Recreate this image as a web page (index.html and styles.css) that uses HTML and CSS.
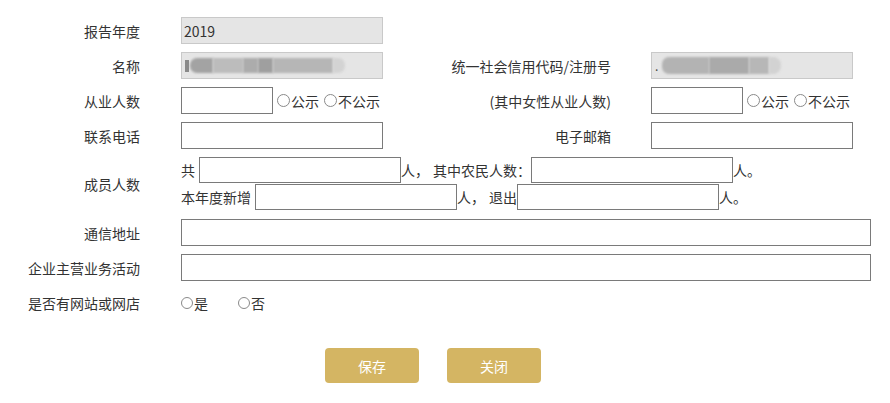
FILE: index.html
```html
<!DOCTYPE html>
<html lang="zh-CN">
<head>
<meta charset="utf-8">
<title>年报</title>
<link rel="stylesheet" href="styles.css">
</head>
<body>
<div class="page">
  <div class="form">
    <div class="lbl">报告年度</div>
    <div class="cell c2"><input class="inp ro w202" type="text" value="2019" readonly></div>
    <div class="cell c3"></div>
    <div class="cell c4"></div>

    <div class="lbl">名称</div>
    <div class="cell c2">
      <div class="inp ro w202 blurbox">
        <span class="ch"></span>
        <span class="blob b1"></span><span class="blob b2"></span><span class="blob b3"></span><span class="blob b4"></span><span class="blob b5"></span><span class="blob b6"></span>
      </div>
    </div>
    <div class="lbl c3">统一社会信用代码/注册号</div>
    <div class="cell c4">
      <div class="inp ro w202 blurbox">
        <span class="dot">.</span>
        <span class="blob r1"></span><span class="blob r2"></span><span class="blob r3"></span><span class="blob r4"></span>
      </div>
    </div>

    <div class="lbl">从业人数</div>
    <div class="cell c2 line">
      <input class="inp w92" type="text">
      <span class="radios"><span class="rd"></span><span>公示</span><span class="rd second"></span><span>不公示</span></span>
    </div>
    <div class="lbl c3">(其中女性从业人数)</div>
    <div class="cell c4 line">
      <input class="inp w92" type="text">
      <span class="radios"><span class="rd"></span><span>公示</span><span class="rd second"></span><span>不公示</span></span>
    </div>

    <div class="lbl">联系电话</div>
    <div class="cell c2"><input class="inp w202" type="text"></div>
    <div class="lbl c3">电子邮箱</div>
    <div class="cell c4"><input class="inp w202" type="text"></div>

    <div class="lbl">成员人数</div>
    <div class="cell wide members">
      <div class="line">
        <span class="t">共</span><input class="inp w202 h26 ml4" type="text"><span class="t">人，</span><span class="t ml4">其中农民人数：</span><input class="inp w202 h26" type="text"><span class="t">人。</span>
      </div>
      <div class="line mt1">
        <span class="t">本年度新增</span><input class="inp w202 h26 ml4" type="text"><span class="t">人，</span><span class="t ml4">退出</span><input class="inp w202 h26" type="text"><span class="t">人。</span>
      </div>
    </div>

    <div class="lbl">通信地址</div>
    <div class="cell wide"><input class="inp wfull" type="text"></div>

    <div class="lbl">企业主营业务活动</div>
    <div class="cell wide"><input class="inp wfull" type="text"></div>

    <div class="lbl">是否有网站或网店</div>
    <div class="cell wide line rowh">
      <span class="opt"><span class="rd"></span>是</span>
      <span class="opt opt2"><span class="rd"></span>否</span>
    </div>
  </div>

  <div class="actions">
    <button class="btn" type="button">保存</button>
    <button class="btn" type="button">关闭</button>
  </div>
</div>
</body>
</html>
```

FILE: styles.css
```css
html, body {
  margin: 0;
  padding: 0;
  background: #ffffff;
}

body {
  font-family: "Noto Sans CJK SC", "Noto Sans", sans-serif;
  font-size: 14px;
  color: #333333;
}

.page {
  padding-top: 17px;
}

.form {
  display: grid;
  grid-template-columns: 140px 291px 180px 260px;
  row-gap: 8px;
  align-items: center;
}

.lbl {
  text-align: right;
  white-space: nowrap;
  line-height: 20px;
}

.cell.c2,
.cell.wide {
  padding-left: 41px;
}

.cell.c4 {
  padding-left: 40px;
}

.cell.wide {
  grid-column: 2 / 5;
}

.line {
  display: flex;
  align-items: center;
  white-space: nowrap;
}

.inp {
  box-sizing: border-box;
  height: 27px;
  border: 1px solid #7a7a7a;
  background: #ffffff;
  margin: 0;
  padding: 0 2px;
  font-family: inherit;
  font-size: 14px;
  color: #333333;
  outline: none;
  display: block;
}

.inp.ro {
  background: #e5e5e5;
  border-color: #c9c9c9;
  padding-left: 2px;
}

.w202 { width: 202px; }
.w92 { width: 92px; }
.wfull { width: 690px; }
.h26 { height: 26px; }
.ml4 { margin-left: 4px; }
.mt1 { margin-top: 1px; }

.members {
  padding-bottom: 1px;
}

.blurbox {
  display: flex;
  align-items: center;
  overflow: hidden;
  padding-left: 0;
}

.blurbox .ch {
  display: block;
  width: 4px;
  height: 12px;
  margin-left: 1px;
  margin-right: 1px;
  background: #8a8a8a;
  filter: blur(0.7px);
}

.blurbox .dot {
  width: 7px;
  color: #444;
  font-size: 12px;
  line-height: 12px;
  padding-left: 1px;
}

.blob {
  display: block;
  height: 15px;
  filter: blur(0.8px);
}

.b1 { width: 23px; background: #a3a3a3; border-radius: 7px 0 0 7px; }
.b2 { width: 30px; background: #bcbcbc; }
.b3 { width: 15px; background: #acacac; }
.b4 { width: 15px; background: #9f9f9f; }
.b5 { width: 60px; background: #b6b6b6; }
.b6 { width: 12px; background: #d3d3d3; border-radius: 0 7px 7px 0; }

.r1 { width: 47px; background: #b3b3b3; border-radius: 7px 0 0 7px; height: 17px; }
.r2 { width: 40px; background: #aaaaaa; height: 17px; }
.r3 { width: 20px; background: #b7b7b7; height: 17px; }
.r4 { width: 12px; background: #d2d2d2; border-radius: 0 8px 8px 0; height: 17px; }

.radios {
  display: inline-flex;
  align-items: center;
  margin-left: 4px;
}

.rd {
  box-sizing: border-box;
  display: inline-block;
  width: 13px;
  height: 13px;
  border: 1px solid #8a8a8a;
  border-radius: 50%;
  background: #ffffff;
  margin-right: 1px;
}

.rd.second {
  margin-left: 5px;
}

.rowh {
  height: 27px;
}

.opt {
  display: inline-flex;
  align-items: center;
}

.opt .rd {
  width: 12px;
  height: 12px;
  margin-right: 1px;
}

.opt2 {
  margin-left: 30px;
}

.actions {
  display: flex;
  gap: 28px;
  padding-left: 325px;
  margin-top: 32px;
}

.btn {
  width: 94px;
  height: 35px;
  border: none;
  border-radius: 4px;
  background: #d4b563;
  color: #ffffff;
  font-family: inherit;
  font-size: 14px;
  padding: 0;
  cursor: pointer;
}
```
